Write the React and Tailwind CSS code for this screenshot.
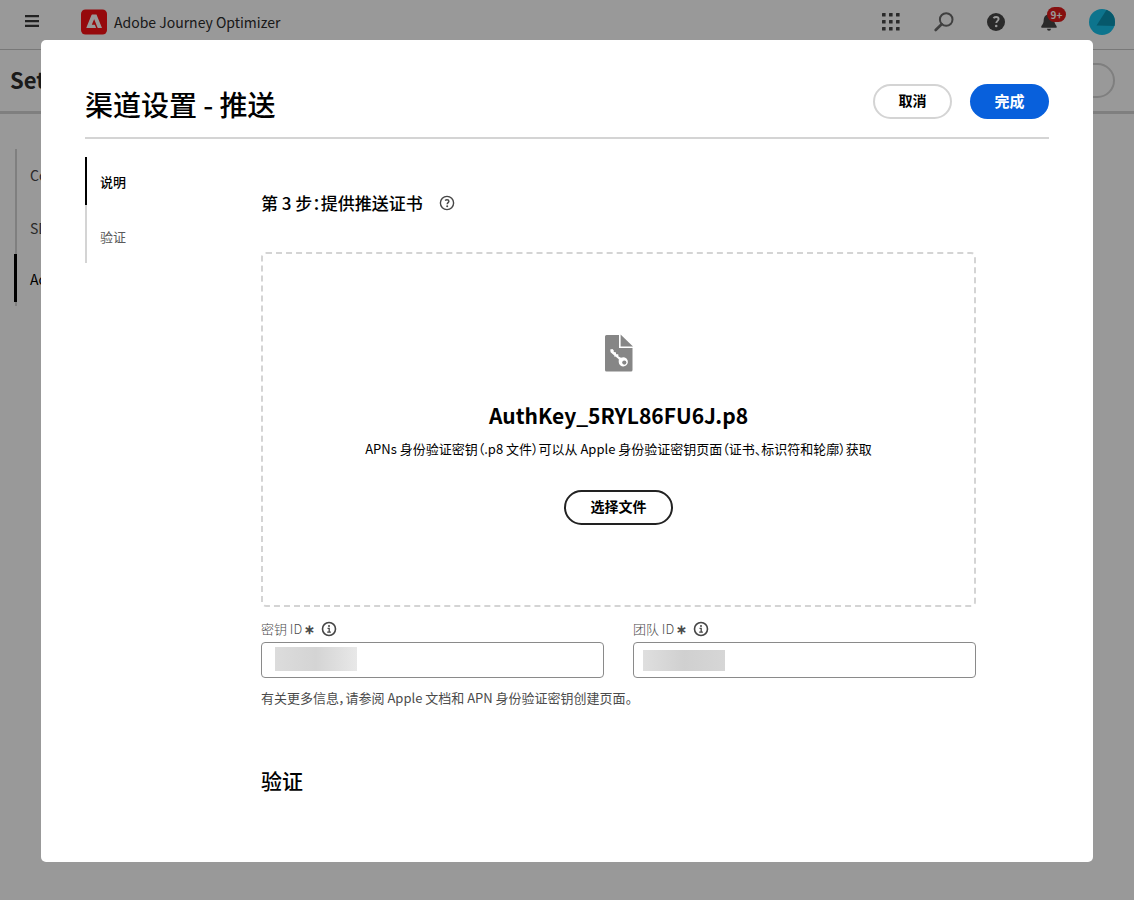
import React from "react";

function AdobeLogo() {
  return (
    <svg viewBox="0 0 26 26" className="size-[26px]" aria-hidden="true">
      <rect width="26" height="25" y="0.5" rx="4.5" fill="#fa0f14" />
      <path
        fill="#fff"
        d="M15.500 5.600 21 19h-3.600a1 1 0 0 1-.9-.6L13.300 10.400a.15.15 0 0 0-.3 0L10.900 15.400a.25.25 0 0 0 .25.35h2.350a.4.4 0 0 1 .4.25l1.100 2.500a.4.4 0 0 1-.35.5H5.700a.3.3 0 0 1-.3-.45L10.500 6a.6.6 0 0 1 .6-.4Z"
      />
    </svg>
  );
}

function MenuIcon() {
  return (
    <svg viewBox="0 0 14 12" className="h-3 w-3.5" aria-hidden="true">
      <path fill="#3a3a3a" d="M0 0h14v2.300H0zM0 4.900h14v2.300H0zM0 9.700h14V12H0z" />
    </svg>
  );
}

function AppsIcon() {
  const offsets = [0, 7, 14];
  return (
    <svg viewBox="0 0 18 18" className="size-[18px]" aria-hidden="true">
      {offsets.map((y) =>
        offsets.map((x) => (
          <rect key={`${x}-${y}`} x={x} y={y} width="3.600" height="3.600" rx="0.5" fill="#464646" />
        ))
      )}
    </svg>
  );
}

function SearchIcon() {
  return (
    <svg viewBox="0 0 20 20" className="size-5" fill="none" stroke="#6b6b6b" aria-hidden="true">
      <circle cx="12.200" cy="7.500" r="6.300" strokeWidth="2" />
      <path d="M7.600 12.200 1.700 18" strokeWidth="2.600" strokeLinecap="round" />
    </svg>
  );
}

function HelpFilledIcon() {
  return (
    <svg viewBox="0 0 18 18" className="size-[18px]" aria-hidden="true">
      <circle cx="9" cy="9" r="9" fill="#464646" />
      <path
        d="M6.400 5.200C7.300 4.300 8.200 4 9.200 4c1.400 0 2.400.8 2.400 2 0 1.800-2.300 2-2.300 4"
        fill="none"
        stroke="#fff"
        strokeWidth="1.900"
      />
      <circle cx="9.200" cy="13" r="1.300" fill="#fff" />
    </svg>
  );
}

function BellIcon() {
  return (
    <svg viewBox="0 0 16 18" className="h-[18px] w-4" fill="#464646" aria-hidden="true">
      <path d="M8 0a1.300 1.300 0 0 1 1.300 1.400C12 2 13.300 4.200 13.300 7c0 4.500 2.500 5.400 2.500 7 0 .5-.2.7-.6.7H.8c-.4 0-.6-.2-.6-.7 0-1.600 2.500-2.500 2.500-7 0-2.800 1.300-5 4-5.600A1.300 1.300 0 0 1 8 0Z" />
      <path d="M6 15.800h4a2 2 0 0 1-4 0Z" />
    </svg>
  );
}

function Avatar() {
  return (
    <svg viewBox="0 0 26 26" className="size-[26px]" aria-hidden="true">
      <defs>
        <clipPath id="avatar-clip">
          <circle cx="13" cy="13" r="13" />
        </clipPath>
      </defs>
      <g clipPath="url(#avatar-clip)">
        <rect width="26" height="26" fill="#16c2ec" />
        <path d="M15.500 4 18 0h8v17L7.500 16.500Z" fill="#0b93b2" />
      </g>
    </svg>
  );
}

function QuestionIcon() {
  return (
    <svg viewBox="0 0 16 16" className="size-4" fill="none" stroke="#464646" aria-hidden="true">
      <circle cx="8" cy="8" r="6.600" strokeWidth="1.400" />
      <path d="M6.100 5.600c.6-.6 1.200-.8 1.900-.8 1.100 0 1.900.6 1.900 1.500 0 1.300-1.700 1.400-1.700 2.900" strokeWidth="1.400" />
      <circle cx="8.200" cy="11.200" r="1" fill="#464646" stroke="none" />
    </svg>
  );
}

function InfoIcon() {
  return (
    <svg viewBox="0 0 16 16" className="size-4" fill="none" stroke="#464646" aria-hidden="true">
      <circle cx="8" cy="8" r="6.500" strokeWidth="1.600" />
      <circle cx="8" cy="4.900" r="1" fill="#464646" stroke="none" />
      <path d="M6.500 7.400h1.700v3.600M6.200 11.200h3.700" strokeWidth="1.300" />
    </svg>
  );
}

function KeyFileIcon() {
  return (
    <svg viewBox="0 0 30 38" className="h-[38px] w-[30px]" aria-hidden="true">
      <path fill="#868686" d="M1 2.500A1.500 1.500 0 0 1 2.500 1H15v13h13.500v22a1.500 1.500 0 0 1-1.500 1.500H2.500A1.500 1.500 0 0 1 1 36Z" />
      <path fill="#868686" d="M16.600.5 29 12.500H16.600Z" />
      <path
        fill="#fff"
        d="M6.200 15.600 8.400 15l1.300 1.300.1 1.800 2 .1.400 2 2 .1.300 2.200 2.500 1.300a4.600 4.600 0 1 1-2.300 4.200l.1-2.800-3.300-2.600-.9.300-.3-1.400-3.700-3.300Z"
      />
      <circle cx="20.300" cy="28.600" r="2.100" fill="#868686" />
    </svg>
  );
}

function IdField({ id, label, blurClass }) {
  return (
    <div className="min-w-0">
      <div className="flex h-6 items-center">
        <label htmlFor={id} className="flex items-center text-[13px] font-light text-[#4b4b4b]">
          {label}
          <span className="ml-0.5 text-[13px] font-bold">∗</span>
        </label>
        <button type="button" aria-label={`${label} 信息`} className="ml-1.5">
          <InfoIcon />
        </button>
      </div>
      <div className="relative mt-[1px]">
        <input
          id={id}
          type="text"
          className="block h-9 w-full rounded border border-[#8a8a8a] bg-white px-3 text-sm"
        />
        <span className={blurClass} />
      </div>
    </div>
  );
}

function BackgroundPage() {
  return (
    <div className="min-h-[900px] bg-white">
      <header className="flex h-[50px] items-center border-b border-[#c8c8c8] pr-[19px] pb-[5px] pl-[25px]">
        <button type="button" aria-label="Menu" className="pb-0.5">
          <MenuIcon />
        </button>
        <a href="#home" className="ml-[42px] flex items-center gap-[7px] text-[14px] text-[#2c2c2c]">
          <AdobeLogo />
          <span>Adobe Journey Optimizer</span>
        </a>
        <div className="ml-auto flex items-center">
          <button type="button" aria-label="Apps">
            <AppsIcon />
          </button>
          <button type="button" aria-label="Search" className="ml-[34px]">
            <SearchIcon />
          </button>
          <button type="button" aria-label="Help" className="ml-[33px]">
            <HelpFilledIcon />
          </button>
          <button type="button" aria-label="Notifications" className="relative ml-9">
            <BellIcon />
            <span className="absolute -top-1.5 left-1.5 flex h-[15px] w-[19px] items-center justify-center rounded-full bg-[#e01b1b] text-[10px] leading-none font-bold text-white">
              9+
            </span>
          </button>
          <button type="button" aria-label="Account" className="ml-8">
            <Avatar />
          </button>
        </div>
      </header>
      <div className="flex h-16 items-center justify-between border-b-[3px] border-[#d4d4d4] pr-[19px] pl-[10px]">
        <h1 className="pb-0.5 text-[22px] font-bold text-[#2c2c2c]">Settings</h1>
        <button type="button" aria-label="More" className="h-[35px] w-20 rounded-full border-2 border-[#d4d4d4]" />
      </div>
      <nav className="mt-[35px] ml-3.5 w-[66px] overflow-hidden text-[14px] text-[#464646]">
        <ul className="ml-px border-l-2 border-[#d4d4d4]">
          <li className="flex h-[53px] items-center pl-[13px]">
            <a href="#configs">Configs</a>
          </li>
          <li className="flex h-[52px] items-center pl-[13px]">
            <a href="#sdk">SDK</a>
          </li>
          <li className="-ml-[3px] flex h-12 items-center border-l-3 border-black pt-0.5 pl-[13px] text-black">
            <a href="#access">Access</a>
          </li>
          <li className="h-1" />
        </ul>
      </nav>
    </div>
  );
}

function SetupDialog() {
  return (
    <section
      role="dialog"
      aria-modal="true"
      aria-labelledby="dialog-title"
      className="w-full rounded-[5px] bg-white px-11 pt-11 text-black"
    >
      <div className="flex items-start justify-between border-b-2 border-[#d4d4d4] pb-[14px]">
        <h2 id="dialog-title" className="pt-0.5 text-[28px] leading-[37px] font-medium">
          渠道设置 - 推送
        </h2>
        <div className="flex gap-[18px]">
          <button
            type="button"
            className="h-[35px] w-[79px] rounded-full border-2 border-[#d4d4d4] pb-[3px] text-[14px] leading-none font-bold"
          >
            取消
          </button>
          <button
            type="button"
            className="h-[35px] w-[79px] rounded-full bg-[#0860dc] pb-[3px] text-[15px] leading-none font-bold text-white"
          >
            完成
          </button>
        </div>
      </div>

      <div className="flex pt-[18px] pr-[73px]">
        <nav className="w-44 shrink-0 text-[13px]">
          <ul>
            <li className="flex h-12 items-center border-l-2 border-black pt-0.5 pl-[13px] font-medium">
              <a href="#description">说明</a>
            </li>
            <li className="flex h-[58px] items-center border-l-2 border-[#d4d4d4] pt-1.5 pl-[13px] text-[#5a5a5a]">
              <a href="#verify">验证</a>
            </li>
          </ul>
        </nav>

        <main className="min-w-0 grow">
          <div className="flex h-[95px] items-center gap-4 pb-1">
            <h3 className="text-[17px] font-medium">第 3 步：提供推送证书</h3>
            <button type="button" aria-label="帮助">
              <QuestionIcon />
            </button>
          </div>

          <div className="flex h-[355px] flex-col items-center rounded-[5px] border-2 border-dashed border-[#d4d4d4] pt-[80px]">
            <KeyFileIcon />
            <p className="mt-[27px] text-[21px] leading-8 font-bold">AuthKey_5RYL86FU6J.p8</p>
            <p className="mt-2 text-[13px] leading-5">
              APNs 身份验证密钥（.p8 文件）可以从 Apple 身份验证密钥页面（证书、标识符和轮廓）获取
            </p>
            <button
              type="button"
              className="mt-[31px] h-[35px] w-[109px] rounded-full border-2 border-[#222] pb-[3px] text-[14px] leading-none font-bold"
            >
              选择文件
            </button>
          </div>

          <div className="mt-2.5 grid grid-cols-2 gap-[29px]">
            <IdField
              id="key-id"
              label="密钥 ID"
              blurClass="absolute top-[5px] left-3.5 h-6 w-[82px] bg-linear-to-r from-[#dcdcdc] via-[#d4d4d4] to-[#e8e8e8]"
            />
            <IdField
              id="team-id"
              label="团队 ID"
              blurClass="absolute top-2 left-2.5 h-[21px] w-[82px] bg-linear-to-r from-[#dfdfdf] via-[#d0d0d0] to-[#d6d6d6]"
            />
          </div>
          <p className="mt-2.5 text-[13px] leading-5 text-[#4b4b4b]">
            有关更多信息，请参阅 Apple 文档和 APN 身份验证密钥创建页面。
          </p>
          <h3 className="mt-14 pb-[66px] text-[21px] leading-8 font-medium">验证</h3>
        </main>
      </div>
    </section>
  );
}

export default function App() {
  return (
    <div
      lang="zh-CN"
      className="relative min-h-screen overflow-hidden font-['Noto_Sans_CJK_SC',sans-serif] [font-feature-settings:'palt']"
    >
      <BackgroundPage />
      <div className="absolute inset-0 flex items-start bg-black/40 px-[41px] pt-10">
        <SetupDialog />
      </div>
    </div>
  );
}
